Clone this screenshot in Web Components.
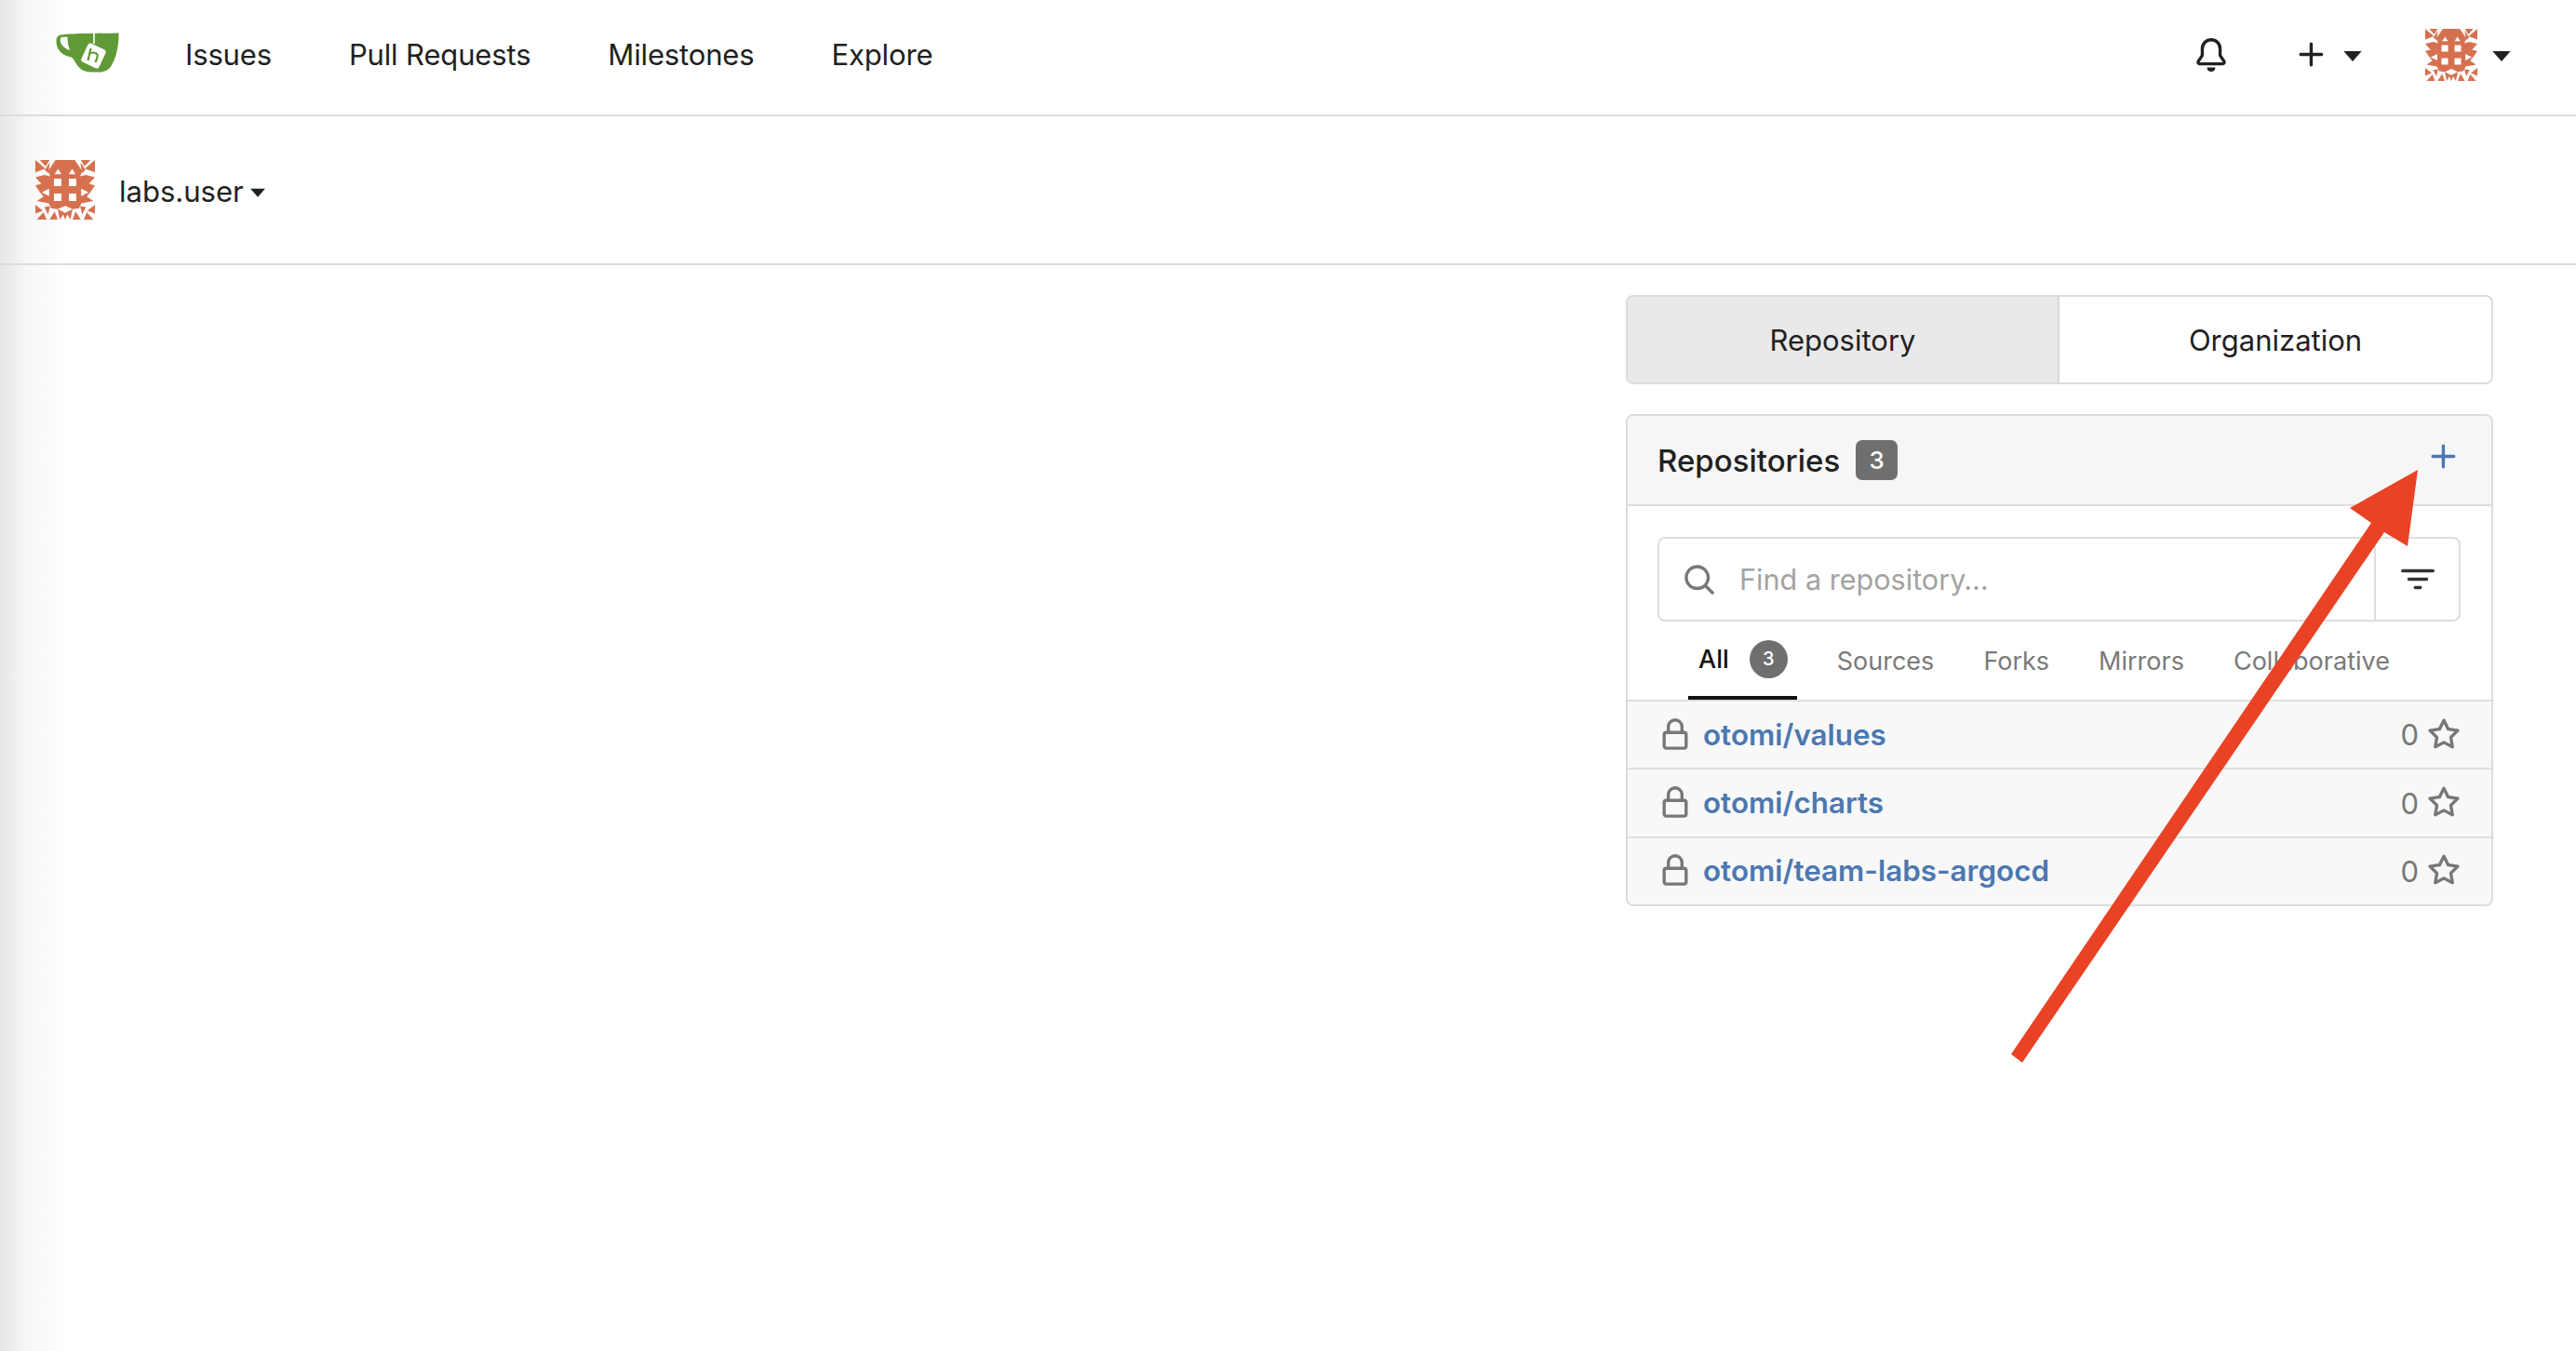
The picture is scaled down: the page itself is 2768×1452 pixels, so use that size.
<!DOCTYPE html>
<html lang="en">
<head>
<meta charset="utf-8">
<title>Gitea dashboard</title>
<style>
  html, body { margin: 0; height: 100%; }
  body {
    min-height: 1452px;
    color: #212121;
    font-family: Inter, "Liberation Sans", sans-serif;
    background: linear-gradient(90deg, #e6e6e6 0, #f6f6f6 28px, #fff 70px);
  }
</style>
</head>
<body>
<gitea-app></gitea-app>

<script>
// octicons, 16 unit grid
const ICONS = {
  bell: 'M8 16a2 2 0 001.985-1.75c.017-.137-.097-.25-.235-.25h-3.5c-.138 0-.252.113-.235.25A2 2 0 008 16z M8 1.5A3.5 3.5 0 004.5 5v2.947c0 .346-.102.683-.294.97l-1.703 2.556a.018.018 0 00-.003.01l.001.006c0 .002.002.004.004.006a.017.017 0 00.006.004l.007.001h10.964l.007-.001a.018.018 0 00.006-.004.016.016 0 00.004-.006l.001-.007a.017.017 0 00-.003-.01l-1.703-2.554a1.75 1.75 0 01-.294-.97V5A3.5 3.5 0 008 1.5zM3 5a5 5 0 0110 0v2.947c0 .05.015.098.042.139l1.703 2.555A1.518 1.518 0 0113.482 13H2.518a1.518 1.518 0 01-1.263-2.36l1.703-2.554A.25.25 0 003 7.947V5z',
  plus: 'M7.75 2a.75.75 0 01.75.75V7h4.25a.75.75 0 010 1.5H8.5v4.25a.75.75 0 01-1.5 0V8.5H2.75a.75.75 0 010-1.5H7V2.75A.75.75 0 017.75 2z',
  search: 'M11.5 7a4.499 4.499 0 11-8.998 0A4.499 4.499 0 0111.5 7zm-.82 4.74a6 6 0 111.06-1.06l3.04 3.04a.75.75 0 11-1.06 1.06l-3.04-3.04z',
  filter: 'M.75 3a.75.75 0 000 1.5h14.5a.75.75 0 000-1.5H.75zM3 7.75A.75.75 0 013.75 7h8.5a.75.75 0 010 1.5h-8.5A.75.75 0 013 7.75zm3 4a.75.75 0 01.75-.75h2.5a.75.75 0 010 1.5h-2.5a.75.75 0 01-.75-.75z',
  lock: 'M4 4v2h-.25A1.75 1.75 0 002 7.75v5.5c0 .966.784 1.75 1.75 1.75h8.5A1.75 1.75 0 0014 13.25v-5.5A1.75 1.75 0 0012.25 6H12V4a4 4 0 10-8 0zm6.5 2V4a2.5 2.5 0 00-5 0v2h5zM12 7.5h.25a.25.25 0 01.25.25v5.5a.25.25 0 01-.25.25h-8.5a.25.25 0 01-.25-.25v-5.5a.25.25 0 01.25-.25H12z',
  star: 'M8 .25a.75.75 0 01.673.418l1.882 3.815 4.21.612a.75.75 0 01.416 1.279l-3.046 2.97.719 4.192a.75.75 0 01-1.088.791L8 12.347l-3.766 1.98a.75.75 0 01-1.088-.79l.72-4.194L.818 6.374a.75.75 0 01.416-1.28l4.21-.611L7.327.668A.75.75 0 018 .25zm0 2.445L6.615 5.5a.75.75 0 01-.564.41l-3.097.45 2.24 2.184a.75.75 0 01.216.664l-.528 3.084 2.769-1.456a.75.75 0 01.698 0l2.77 1.456-.53-3.084a.75.75 0 01.216-.664l2.24-2.183-3.096-.45a.75.75 0 01-.564-.41L8 2.694v.001z',
  caret: 'M1 5h14l-7 8z'
};

class OctIcon extends HTMLElement {
  connectedCallback() {
    const size = this.getAttribute('size') || 36;
    const root = this.shadowRoot || this.attachShadow({ mode: 'open' });
    root.innerHTML = `
      <style>:host { display: inline-flex; flex: none; } svg { display: block; fill: currentColor; }</style>
      <svg width="${size}" height="${size}" viewBox="0 0 16 16"><path fill-rule="evenodd" d="${ICONS[this.getAttribute('name')]}"/></svg>`;
  }
}

// gitea's generated avatar, one half mirrored
const AVATAR_HALF = `
  <polygon points="5.400,0 8,0 8,16 6.600,16 6,13.200 4.300,13 3.600,11.600 0.400,11 2.200,9.800 1.200,8.600 0,6.800 1.600,6.400 0,4.600 2.400,4 4,4.400 3.400,3 4.300,1.600"/>
  <polygon points="0,0 2.700,2.300 0,3.300"/>
  <polygon points="1.200,0 3.800,0 2.800,1.700"/>
  <polygon points="3.900,0.600 3.500,3.500 2.500,2.700"/>
  <polygon points="0,12 2,13.600 0,14.400"/>
  <polygon points="0.400,16 2.200,14 3,16"/>
  <polygon points="2.400,12.600 4,12.400 3.400,14.600"/>
  <polygon points="3.800,16 5.200,13.800 6,16"/>
  <polygon class="w" points="5.200,3.800 6.100,2.400 7,3.800"/>
  <polygon class="w" points="1.700,8.700 3.700,7.700 3.700,9.700"/>
  <rect class="w" x="5" y="5" width="2" height="2"/>
  <rect class="w" x="5" y="9" width="2" height="2"/>
  <polygon class="w" points="8,12.300 6,13.200 8,14.200"/>
  <polygon class="w" points="6.600,16 7.400,14.600 8,16"/>`;

class UserAvatar extends HTMLElement {
  connectedCallback() {
    const size = this.getAttribute('size') || 64;
    this.attachShadow({ mode: 'open' }).innerHTML = `
      <style>
        :host { display: inline-flex; flex: none; }
        svg { display: block; fill: #d6714f; }
        .w { fill: #fff; }
      </style>
      <svg width="${size}" height="${size}" viewBox="0 0 16 16">
        <g>${AVATAR_HALF}</g>
        <g transform="matrix(-1 0 0 1 16 0)">${AVATAR_HALF}</g>
      </svg>`;
  }
}

class GiteaLogo extends HTMLElement {
  constructor() {
    super();
    this.attachShadow({ mode: 'open' }).innerHTML = `
      <style>:host { display: inline-flex; flex: none; } svg { display: block; }</style>
      <svg width="68" height="44" viewBox="0 0 68 44">
        <path fill="#609a36" d="M5 3.500C20 1.500 50 2 67.500 1.500C68 12 65.500 27 60 36C57 41 53 43 48 43.500H38C30 43.500 25 40 21 33C19 29.500 18 28 16.500 27.500C8 26 0 20 0.500 10C0.700 6 2 4 5 3.500Z"/>
        <path fill="#fff" d="M6 6L12.500 5.500C12.500 11 13.500 16 15 20C9.500 18 5 14 4.800 10C4.700 8 5 6.800 6 6Z"/>
        <path stroke="#fff" stroke-width="1.600" fill="none" d="M41 1V13"/>
        <rect x="30" y="15" width="21" height="22" rx="3" fill="#fff" transform="rotate(25 40.500 26)"/>
        <path stroke="#609a36" stroke-width="2.200" fill="none" d="M37.500 18L34.500 31M36 24C39 21.500 43 22.500 44.500 24.500C45.500 26 44 29 42.500 33"/>
      </svg>`;
  }
}

const navTpl = document.createElement('template');
navTpl.innerHTML = `
<style>
  :host {
    display: flex;
    align-items: center;
    height: 117px;
    padding: 0 69px 6px 60px;
    border-bottom: 2px solid #dcdcdc;
    font-size: 31px;
    letter-spacing: -0.15px;
  }
  gitea-logo { margin: -5px 71px 0 0; }
  nav { display: flex; gap: 83px; }
  .right { margin-left: auto; display: flex; align-items: center; }
  oct-icon.caret { color: #212121; margin-top: 1px; }
</style>
<gitea-logo></gitea-logo>
<nav><span>Issues</span><span>Pull Requests</span><span>Milestones</span><span>Explore</span></nav>
<div class="right">
  <oct-icon name="bell"></oct-icon>
  <oct-icon name="plus" style="margin-left:72px"></oct-icon>
  <oct-icon class="caret" name="caret" size="22" style="margin-left:15px"></oct-icon>
  <user-avatar size="56" style="margin-left:67px"></user-avatar>
  <oct-icon class="caret" name="caret" size="22" style="margin-left:15px"></oct-icon>
</div>`;
class GiteaNav extends HTMLElement {
  constructor() {
    super();
    this.attachShadow({ mode: 'open' }).appendChild(navTpl.content.cloneNode(true));
  }
}

const ctxTpl = document.createElement('template');
ctxTpl.innerHTML = `
<style>
  :host {
    display: flex;
    align-items: center;
    height: 158px;
    padding-left: 38px;
    border-bottom: 2px solid #dcdcdc;
    font-size: 31px;
  }
  span { margin: 3px 0 0 26px; }
  oct-icon { margin: 3px 0 0 6px; }
</style>
<user-avatar size="64"></user-avatar><span><slot></slot></span><oct-icon name="caret" size="18"></oct-icon>`;
class ContextBar extends HTMLElement {
  constructor() {
    super();
    this.attachShadow({ mode: 'open' }).appendChild(ctxTpl.content.cloneNode(true));
  }
}

const switchTpl = document.createElement('template');
switchTpl.innerHTML = `
<style>
  :host {
    display: grid;
    grid-template-columns: 464px 1fr;
    height: 92px;
    border: 2px solid #dcdcdc;
    border-radius: 8px;
    overflow: hidden;
    font-size: 31px;
  }
  div { display: flex; align-items: center; justify-content: center; }
  .active { background: #e9e9e9; border-right: 2px solid #d8d8d8; }
</style>
<div class="active">Repository</div><div>Organization</div>`;
class CreateSwitch extends HTMLElement {
  constructor() {
    super();
    this.attachShadow({ mode: 'open' }).appendChild(switchTpl.content.cloneNode(true));
  }
}

const rowTpl = document.createElement('template');
rowTpl.innerHTML = `
<style>
  :host {
    display: flex;
    align-items: center;
    height: 71.4px;
    padding: 0 33px 0 33px;
    background: #f8f8f8;
    border-top: 2px solid #dfdfdf;
    color: #777;
    font-size: 31px;
  }
  a { margin-left: 12px; font-size: 31.4px; font-weight: 600; color: #4b78b1; }
  .stars { margin-left: auto; margin-right: 9px; }
</style>
<oct-icon name="lock"></oct-icon><a><slot></slot></a><span class="stars">0</span><oct-icon name="star"></oct-icon>`;
class RepoRow extends HTMLElement {
  constructor() {
    super();
    this.attachShadow({ mode: 'open' }).appendChild(rowTpl.content.cloneNode(true));
  }
}

const panelTpl = document.createElement('template');
panelTpl.innerHTML = `
<style>
  :host {
    display: block;
    border: 2px solid #dcdcdc;
    border-radius: 8px;
    overflow: hidden;
  }
  header {
    display: flex;
    align-items: center;
    height: 95px;
    padding: 0 33px 0 32px;
    background: #f6f6f6;
    border-bottom: 2px solid #dcdcdc;
    font-size: 33px;
    font-weight: 500;
  }
  .count {
    margin-left: 17px;
    width: 45px;
    height: 43px;
    display: flex;
    align-items: center;
    justify-content: center;
    border-radius: 7px;
    background: #6f6f6f;
    color: #fff;
    font-size: 26px;
  }
  header oct-icon { margin: -7px 0 0 auto; color: #4b78b1; }
  .body { padding: 33px 33px 0 32px; }
  .search {
    display: flex;
    align-items: stretch;
    height: 87px;
    border: 2px solid #dedede;
    border-radius: 8px;
  }
  .find {
    flex: 1;
    display: flex;
    align-items: center;
    padding-left: 25px;
    color: #a3a3a3;
    font-size: 30.6px;
  }
  .find oct-icon { color: #777; margin-right: 25px; }
  .opts {
    width: 89px;
    display: flex;
    align-items: center;
    justify-content: center;
    border-left: 2px solid #dedede;
    color: #333;
  }
  .tabs {
    display: flex;
    gap: 31px;
    height: 84px;
    margin-left: 33px;
    font-size: 27px;
    color: #7a7a7a;
  }
  .tabs div { display: flex; align-items: center; padding: 0 11px; }
  .tabs .on { color: #111; font-weight: 500; border-bottom: 4px solid #111; height: 80px; padding-right: 10px; margin-right: 1px; }
  .dot {
    margin-left: 22px;
    width: 41px;
    height: 41px;
    display: flex;
    align-items: center;
    justify-content: center;
    border-radius: 50%;
    background: #6f6f6f;
    color: #fff;
    font-size: 20px;
  }
</style>
<header><span>Repositories</span><span class="count">3</span><oct-icon name="plus"></oct-icon></header>
<div class="body">
  <div class="search">
    <div class="find"><oct-icon name="search"></oct-icon>Find a repository…</div>
    <div class="opts"><oct-icon name="filter"></oct-icon></div>
  </div>
  <div class="tabs">
    <div class="on">All<span class="dot">3</span></div>
    <div>Sources</div><div>Forks</div><div>Mirrors</div><div>Collaborative</div>
  </div>
</div>
<slot></slot>`;
class RepoPanel extends HTMLElement {
  constructor() {
    super();
    this.attachShadow({ mode: 'open' }).appendChild(panelTpl.content.cloneNode(true));
  }
}

// red annotation drawn on top of the screenshot
class ArrowMark extends HTMLElement {
  constructor() {
    super();
    this.attachShadow({ mode: 'open' }).innerHTML = `
      <style>:host { position: absolute; left: 0; top: 0; pointer-events: none; } svg { display: block; }</style>
      <svg width="2768" height="1452" viewBox="0 0 2768 1452">
        <polygon fill="#ea4225" points="2598,505 2525,546 2548,562 2161,1133 2173,1142 2562,572 2587,587"/>
      </svg>`;
  }
}

const appTpl = document.createElement('template');
appTpl.innerHTML = `
<style>
  :host { display: block; }
  .col { display: flex; flex-direction: column; gap: 32px; width: 932px; margin: 32px 89px 0 auto; }
</style>
<gitea-nav></gitea-nav>
<context-bar>labs.user</context-bar>
<div class="col">
  <create-switch></create-switch>
  <repo-panel>
    <repo-row>otomi/values</repo-row>
    <repo-row>otomi/charts</repo-row>
    <repo-row>otomi/team-labs-argocd</repo-row>
  </repo-panel>
</div>
<arrow-mark></arrow-mark>`;
class GiteaApp extends HTMLElement {
  constructor() {
    super();
    this.attachShadow({ mode: 'open' }).appendChild(appTpl.content.cloneNode(true));
  }
}

customElements.define('oct-icon', OctIcon);
customElements.define('user-avatar', UserAvatar);
customElements.define('gitea-logo', GiteaLogo);
customElements.define('gitea-nav', GiteaNav);
customElements.define('context-bar', ContextBar);
customElements.define('create-switch', CreateSwitch);
customElements.define('repo-row', RepoRow);
customElements.define('repo-panel', RepoPanel);
customElements.define('arrow-mark', ArrowMark);
customElements.define('gitea-app', GiteaApp);
</script>
</body>
</html>
